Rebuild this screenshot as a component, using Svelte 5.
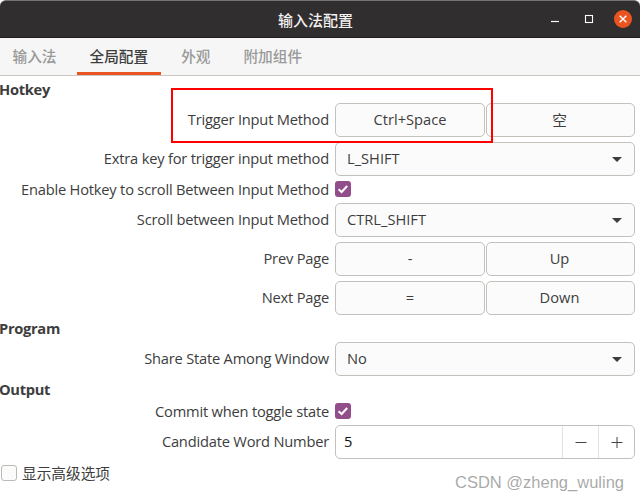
<script lang="ts">
  const tabs = ['输入法', '全局配置', '外观', '附加组件'];
  const activeTab = 1;
</script>

<div class="window">
  <header class="titlebar">
    <span class="title">输入法配置</span>
    <div class="controls">
      <svg class="ctl" width="12" height="12" viewBox="0 0 12 12"><path d="M1 8.5h8" stroke="#fff" stroke-width="1.2" fill="none"/></svg>
      <svg class="ctl" width="12" height="12" viewBox="0 0 12 12"><rect x="1.5" y="2.5" width="7" height="7" stroke="#fff" stroke-width="1.1" fill="none"/></svg>
      <svg class="ctl close" width="18" height="18" viewBox="0 0 18 18">
        <circle cx="9" cy="9" r="9" fill="#e95420"/>
        <path d="M5.7 5.7l6.6 6.6M12.3 5.7l-6.6 6.6" stroke="#fff" stroke-width="1.4" fill="none"/>
      </svg>
    </div>
  </header>

  <nav class="tabs">
    {#each tabs as tab, i}
      <div class="tab" class:active={i === activeTab}>{tab}</div>
    {/each}
  </nav>

  <main class="content">
    <h4>Hotkey</h4>
    <div class="form">
      <div class="label">Trigger Input Method</div>
      <div class="pair"><button>Ctrl+Space</button><button>空</button></div>

      <div class="label">Extra key for trigger input method</div>
      <div class="combo"><span>L_SHIFT</span><i class="arrow"></i></div>

      <div class="label short">Enable Hotkey to scroll Between Input Method</div>
      <div class="check on short"><svg width="16" height="16" viewBox="0 0 16 16"><path d="M3.6 8.2l3 2.8 5.6-6" stroke="#fff" stroke-width="2" fill="none"/></svg></div>

      <div class="label">Scroll between Input Method</div>
      <div class="combo"><span>CTRL_SHIFT</span><i class="arrow"></i></div>

      <div class="label">Prev Page</div>
      <div class="pair"><button>-</button><button>Up</button></div>

      <div class="label">Next Page</div>
      <div class="pair"><button>=</button><button>Down</button></div>
    </div>

    <h4>Program</h4>
    <div class="form">
      <div class="label">Share State Among Window</div>
      <div class="combo"><span>No</span><i class="arrow"></i></div>
    </div>

    <h4>Output</h4>
    <div class="form">
      <div class="label short">Commit when toggle state</div>
      <div class="check on short"><svg width="16" height="16" viewBox="0 0 16 16"><path d="M3.6 8.2l3 2.8 5.6-6" stroke="#fff" stroke-width="2" fill="none"/></svg></div>

      <div class="label">Candidate Word Number</div>
      <div class="spin">
        <span class="value">5</span>
        <span class="step"><svg width="14" height="14" viewBox="0 0 14 14"><path d="M1.5 7.5h11" stroke="#444" stroke-width="1" fill="none"/></svg></span>
        <span class="step"><svg width="14" height="14" viewBox="0 0 14 14"><path d="M1.5 7.5h11M7 2v11" stroke="#444" stroke-width="1" fill="none"/></svg></span>
      </div>
    </div>

    <div class="advanced">
      <div class="check"></div>
      <span>显示高级选项</span>
    </div>
  </main>

  <div class="redbox"></div>
  <div class="watermark">CSDN @zheng_wuling</div>
</div>

<style>
  :global(body) {
    margin: 0;
    background: #fff;
  }

  .window {
    position: relative;
    width: 640px;
    height: 501px;
    overflow: hidden;
    font-family: "Open Sans", "Noto Sans CJK SC", sans-serif;
    font-size: 14.67px;
    color: #3d3d3d;
    background: #fff;
  }

  .titlebar {
    position: relative;
    height: 38px;
    box-sizing: border-box;
    background: #302e2e;
    border-top: 1px solid #77726f;
    border-bottom: 1px solid #1f1d1d;
    border-radius: 6px 6px 0 0;
    display: flex;
    align-items: center;
    justify-content: center;
  }

  .title {
    color: #f4f2f0;
    font-family: "Noto Sans CJK SC", sans-serif;
    font-size: 15px;
    font-weight: 500;
    margin: 1px 9px 0 0;
  }

  .controls {
    position: absolute;
    right: 8px;
    top: 9px;
    display: flex;
    align-items: center;
  }

  .ctl {
    display: block;
    margin-right: 22px;
  }

  .ctl + .ctl {
    margin-right: 18px;
  }

  .ctl.close {
    margin-right: 0;
  }

  .tabs {
    height: 38px;
    box-sizing: border-box;
    background: #f6f6f6;
    border-bottom: 1px solid #cdc7c2;
    display: flex;
    gap: 8px;
  }

  .tab {
    padding: 0 12.5px;
    height: 37px;
    line-height: 36px;
    box-sizing: border-box;
    color: #999;
    font-weight: 500;
    font-family: "Noto Sans CJK SC", sans-serif;
  }

  .tab.active {
    color: #3d3d3d;
    border-bottom: 3px solid #e95420;
  }

  h4 {
    margin: 5px 0 0 -1px;
    height: 17px;
    line-height: 17px;
    font-size: 14.67px;
    font-weight: 700;
    letter-spacing: -0.3px;
    color: #3d3d3d;
  }

  .form {
    display: grid;
    grid-template-columns: 330px 300px;
    column-gap: 5px;
    row-gap: 5px;
    margin-top: 5px;
  }

  .label {
    text-align: right;
    height: 34px;
    line-height: 32px;
    white-space: nowrap;
    letter-spacing: -0.2px;
    margin-right: 1px;
  }

  .label.short {
    height: 17px;
    line-height: 17px;
  }

  .pair {
    display: grid;
    grid-template-columns: 150px 149px;
    gap: 1px;
    height: 34px;
  }

  button, .combo, .spin {
    box-sizing: border-box;
    height: 34px;
    border: 1px solid #c4c0bc;
    border-radius: 5px;
    background: #fbfbfb;
    color: #3d3d3d;
    font: inherit;
  }

  button {
    padding: 0 0 2px;
  }

  button + button {
    padding-right: 2px;
  }

  .combo {
    display: flex;
    align-items: center;
    justify-content: space-between;
    padding: 0 12px 2px 11px;
  }

  .arrow {
    width: 0;
    height: 0;
    margin-top: 3px;
    border-left: 5px solid transparent;
    border-right: 5px solid transparent;
    border-top: 5px solid #3d3d3d;
  }

  .check {
    box-sizing: border-box;
    width: 16px;
    height: 16px;
    border: 1px solid #bdb9b5;
    border-radius: 3px;
    background: #fbfbfb;
  }

  .check.on {
    border: 0;
    background: #924d8b;
  }

  .check.short {
    margin-bottom: 1px;
  }

  .check svg {
    display: block;
  }

  .spin {
    display: flex;
    background: #fff;
  }

  .value {
    flex: 1;
    line-height: 30px;
    padding-left: 8px;
    color: #111;
  }

  .step {
    width: 35px;
    border-left: 1px solid #e4e2e0;
    display: flex;
    align-items: center;
    justify-content: center;
  }

  .advanced {
    display: flex;
    align-items: center;
    gap: 5px;
    margin: 5px 0 0 1px;
    height: 17px;
  }

  .advanced span {
    font-family: "Noto Sans CJK SC", sans-serif;
  }

  .redbox {
    position: absolute;
    left: 171px;
    top: 88px;
    width: 318px;
    height: 51px;
    border: 2px solid #f00;
  }

  .watermark {
    position: absolute;
    left: 455px;
    top: 473px;
    font-family: "Liberation Sans", sans-serif;
    font-size: 16.5px;
    color: rgba(110, 110, 110, 0.6);
    white-space: nowrap;
  }
</style>
